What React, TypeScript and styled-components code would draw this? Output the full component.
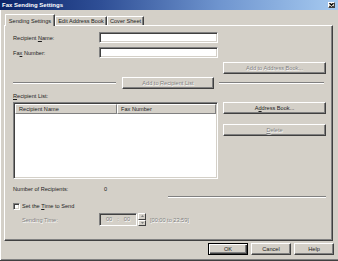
import React from "react";
import styled, { createGlobalStyle } from "styled-components";

const Global = createGlobalStyle`
  html, body { margin: 0; padding: 0; background: #d4d0c8; }
  body { font-family: "Liberation Sans", Arial, sans-serif; font-size: 5.6px; color: #1c1c1c; }
  * { box-sizing: border-box; }
`;

const Window = styled.div`
  width: 338px;
  height: 261px;
  background: #d4d0c8;
  display: flex;
  flex-direction: column;
  border-bottom: 1px solid #404040;
  box-shadow: inset 1px 0 0 #ffffff, inset 0 -1px 0 #808080;
  overflow: hidden;
`;

const TitleBar = styled.div`
  height: 10px;
  flex: none;
  display: flex;
  align-items: center;
  justify-content: space-between;
  padding: 0 3px 0 2px;
  background: linear-gradient(90deg, #0a246a 0%, #2f4f96 30%, #6f95cf 65%, #a6caf0 100%);
`;

const Title = styled.span`
  color: #fff;
  font-weight: bold;
  font-size: 6px;
  line-height: 10px;
`;

const CloseBtn = styled.div`
  width: 7px;
  height: 6px;
  background: #d4d0c8;
  border-top: 1px solid #fff;
  border-left: 1px solid #fff;
  border-right: 1px solid #404040;
  border-bottom: 1px solid #404040;
  display: flex;
  align-items: center;
  justify-content: center;
`;

const Body = styled.div`
  flex: 1;
  display: flex;
  flex-direction: column;
  padding: 4px 0 0 4px;
`;

const TabStrip = styled.div`
  display: flex;
  align-items: flex-end;
  height: 11px;
  padding-left: 1px;
  position: relative;
  z-index: 1;
`;

const Tab = styled.div<{ $active?: boolean; $w: number }>`
  width: ${(p) => p.$w}px;
  height: ${(p) => (p.$active ? 12 : 9)}px;
  margin-bottom: ${(p) => (p.$active ? -1 : 0)}px;
  background: #d4d0c8;
  border-top: 1px solid #fff;
  border-left: 1px solid #fff;
  border-right: 1px solid #404040;
  box-shadow: inset -1px 0 0 #808080;
  display: flex;
  align-items: ${(p) => (p.$active ? "flex-start" : "center")};
  justify-content: center;
  padding-top: ${(p) => (p.$active ? 3 : 0)}px;
  line-height: 7px;
  white-space: nowrap;
`;

const Panel = styled.div`
  width: 329px;
  height: 216px;
  border-top: 1px solid #fff;
  border-left: 1px solid #fff;
  border-right: 1px solid #404040;
  border-bottom: 1px solid #404040;
  box-shadow: inset -1px -1px 0 #808080;
  padding: 6px 6px 0 8px;
  display: flex;
  flex-direction: column;
`;

const FieldRow = styled.div<{ $mt?: number }>`
  display: flex;
  align-items: center;
  height: 11px;
  margin-top: ${(p) => p.$mt ?? 0}px;
`;

const Label = styled.span<{ $w?: number; $disabled?: boolean; $pl?: number }>`
  width: ${(p) => (p.$w ? `${p.$w}px` : "auto")};
  flex: none;
  padding-left: ${(p) => p.$pl ?? 0}px;
  white-space: nowrap;
  line-height: 8px;
  color: ${(p) => (p.$disabled ? "#808080" : "inherit")};
  text-shadow: ${(p) => (p.$disabled ? "0.6px 0.6px 0 #fff" : "none")};
`;

const U = styled.span`
  text-decoration: underline;
  text-underline-offset: 0.5px;
`;

const TextInput = styled.div<{ $w: number }>`
  width: ${(p) => p.$w}px;
  height: 11px;
  background: #fff;
  border-top: 1px solid #808080;
  border-left: 1px solid #808080;
  border-right: 1px solid #fff;
  border-bottom: 1px solid #fff;
  box-shadow: inset 1px 1px 0 #404040, inset -1px -1px 0 #d4d0c8;
`;

const ButtonRow = styled.div<{ $mt?: number; $pr?: number }>`
  display: flex;
  justify-content: flex-end;
  align-items: center;
  gap: 3px;
  margin-top: ${(p) => p.$mt ?? 0}px;
  padding-right: ${(p) => p.$pr ?? 0}px;
`;

const Button = styled.div<{ $w: number; $disabled?: boolean; $default?: boolean; $ml?: number }>`
  width: ${(p) => p.$w}px;
  height: 12px;
  flex: none;
  margin-left: ${(p) => p.$ml ?? 0}px;
  background: #d4d0c8;
  border: 1px solid;
  border-top-color: ${(p) => (p.$default ? "#000" : "#fff")};
  border-left-color: ${(p) => (p.$default ? "#000" : "#fff")};
  border-right-color: ${(p) => (p.$default ? "#000" : "#404040")};
  border-bottom-color: ${(p) => (p.$default ? "#000" : "#404040")};
  box-shadow: ${(p) =>
    p.$default
      ? "inset 1px 1px 0 #fff, inset -1px -1px 0 #404040, inset -2px -2px 0 #808080"
      : "inset -1px -1px 0 #808080"};
  display: flex;
  align-items: center;
  justify-content: center;
  line-height: 7px;
  white-space: nowrap;
  color: ${(p) => (p.$disabled ? "#808080" : "inherit")};
  text-shadow: ${(p) => (p.$disabled ? "0.6px 0.6px 0 #fff" : "none")};
`;

const SplitRow = styled.div`
  display: flex;
  align-items: center;
  height: 12px;
  margin-top: 3px;
`;

const Etched = styled.div<{ $w?: number; $ml?: number; $mr?: number; $mt?: number }>`
  height: 2px;
  flex: ${(p) => (p.$w ? "none" : "1 1 auto")};
  width: ${(p) => (p.$w ? `${p.$w}px` : "auto")};
  margin-left: ${(p) => p.$ml ?? 0}px;
  margin-right: ${(p) => p.$mr ?? 0}px;
  margin-top: ${(p) => p.$mt ?? 0}px;
  border-top: 1px solid #808080;
  border-bottom: 1px solid #fff;
`;

const SectionRule = styled(Etched)`
  flex: none;
`;

const SectionLabel = styled.div<{ $mt?: number }>`
  margin-top: ${(p) => p.$mt ?? 0}px;
  line-height: 8px;
  height: 8px;
  white-space: nowrap;
`;

const ListArea = styled.div`
  display: grid;
  grid-template-columns: 205px 103px;
  column-gap: 5px;
  margin-top: 2px;
`;

const ListBox = styled.div`
  height: 77px;
  background: #fff;
  border-top: 1px solid #808080;
  border-left: 1px solid #808080;
  border-right: 1px solid #fff;
  border-bottom: 1px solid #fff;
  box-shadow: inset 1px 1px 0 #404040, inset -1px -1px 0 #d4d0c8;
  padding: 1px;
`;

const ListHeader = styled.div`
  display: grid;
  grid-template-columns: 102px 1fr;
  height: 10px;
`;

const HeaderCell = styled.div`
  background: #d4d0c8;
  border-top: 1px solid #fff;
  border-left: 1px solid #fff;
  border-right: 1px solid #808080;
  border-bottom: 1px solid #808080;
  padding-left: 3px;
  line-height: 8px;
  white-space: nowrap;
`;

const SideButtons = styled.div`
  display: flex;
  flex-direction: column;
  gap: 10px;
`;

const InfoRow = styled.div`
  display: flex;
  align-items: center;
  margin-top: 6px;
  height: 8px;
`;

const CheckRow = styled.div`
  display: flex;
  align-items: center;
  gap: 2px;
  margin-top: 4px;
  height: 8px;
`;

const CheckBox = styled.div`
  width: 7px;
  height: 7px;
  background: #fff;
  border-top: 1px solid #808080;
  border-left: 1px solid #808080;
  border-right: 1px solid #fff;
  border-bottom: 1px solid #fff;
  box-shadow: inset 1px 1px 0 #404040, inset -1px -1px 0 #d4d0c8;
`;

const TimeRow = styled.div`
  display: flex;
  align-items: center;
  margin-top: 3px;
  height: 13px;
`;

const TimeField = styled.div`
  width: 38px;
  height: 13px;
  background: #d4d0c8;
  border-top: 1px solid #808080;
  border-left: 1px solid #808080;
  border-right: 1px solid #fff;
  border-bottom: 1px solid #fff;
  box-shadow: inset 1px 1px 0 #404040, inset -1px -1px 0 #d4d0c8;
  display: flex;
  align-items: center;
  justify-content: center;
  gap: 5px;
  color: #808080;
  text-shadow: 0.6px 0.6px 0 #fff;
  line-height: 7px;
`;

const Spinner = styled.div`
  width: 8px;
  height: 13px;
  margin-left: 1px;
  display: flex;
  flex-direction: column;
`;

const SpinHalf = styled.div`
  flex: 1;
  background: #d4d0c8;
  border-top: 1px solid #fff;
  border-left: 1px solid #fff;
  border-right: 1px solid #404040;
  border-bottom: 1px solid #404040;
  display: flex;
  align-items: center;
  justify-content: center;
`;

const RangeText = styled.span`
  margin-left: 4px;
  white-space: nowrap;
  color: #808080;
  text-shadow: 0.6px 0.6px 0 #fff;
  line-height: 8px;
`;

const Arrow = ({ up }: { up?: boolean }) => (
  <svg width="3" height="2" viewBox="0 0 3 2">
    <path d={up ? "M1.5 0 L3 2 L0 2 Z" : "M0 0 L3 0 L1.5 2 Z"} fill="#808080" />
  </svg>
);

export default function App() {
  return (
    <>
      <Global />
      <Window>
        <TitleBar>
          <Title>Fax Sending Settings</Title>
          <CloseBtn>
            <svg width="5" height="4" viewBox="0 0 5 4">
              <path d="M0.5 0 L4.5 4 M4.5 0 L0.5 4" stroke="#000" strokeWidth="1.1" />
            </svg>
          </CloseBtn>
        </TitleBar>
        <Body>
          <TabStrip>
            <Tab $active $w={50}>Sending Settings</Tab>
            <Tab $w={52}>Edit Address Book</Tab>
            <Tab $w={37}>Cover Sheet</Tab>
          </TabStrip>
          <Panel>
            <FieldRow>
              <Label $w={86}>
                Recipient <U>N</U>ame:
              </Label>
              <TextInput $w={119} />
            </FieldRow>
            <FieldRow $mt={4}>
              <Label $w={86}>
                Fa<U>x</U> Number:
              </Label>
              <TextInput $w={119} />
            </FieldRow>
            <ButtonRow $mt={4}>
              <Button $w={103} $disabled>
                Add to Address Book...
              </Button>
            </ButtonRow>
            <SplitRow>
              <Etched $w={103} />
              <Button $w={92} $disabled $ml={6}>
                Add to Recipient List
              </Button>
              <Etched $ml={5} $mr={2} />
            </SplitRow>
            <SectionLabel $mt={3}>
              <U>R</U>ecipient List:
            </SectionLabel>
            <ListArea>
              <ListBox>
                <ListHeader>
                  <HeaderCell>Recipient Name</HeaderCell>
                  <HeaderCell>Fax Number</HeaderCell>
                </ListHeader>
              </ListBox>
              <SideButtons>
                <Button $w={103}>
                  A<U>d</U>dress Book...
                </Button>
                <Button $w={103} $disabled>
                  <U>D</U>elete
                </Button>
              </SideButtons>
            </ListArea>
            <InfoRow>
              <Label $w={91}>Number of Recipients:</Label>
              <Label>0</Label>
            </InfoRow>
            <SectionRule $ml={155} $mt={3} />
            <CheckRow>
              <CheckBox />
              <Label>
                Set the <U>T</U>ime to Send
              </Label>
            </CheckRow>
            <TimeRow>
              <Label $w={86} $pl={9} $disabled>
                Sending Time:
              </Label>
              <TimeField>
                <span>00</span>
                <span>:</span>
                <span>00</span>
              </TimeField>
              <Spinner>
                <SpinHalf>
                  <Arrow up />
                </SpinHalf>
                <SpinHalf>
                  <Arrow />
                </SpinHalf>
              </Spinner>
              <RangeText>[00:00 to 23:59]</RangeText>
            </TimeRow>
          </Panel>
          <ButtonRow $mt={2} $pr={4}>
            <Button $w={40} $default>
              OK
            </Button>
            <Button $w={40}>Cancel</Button>
            <Button $w={40}>Help</Button>
          </ButtonRow>
        </Body>
      </Window>
    </>
  );
}
